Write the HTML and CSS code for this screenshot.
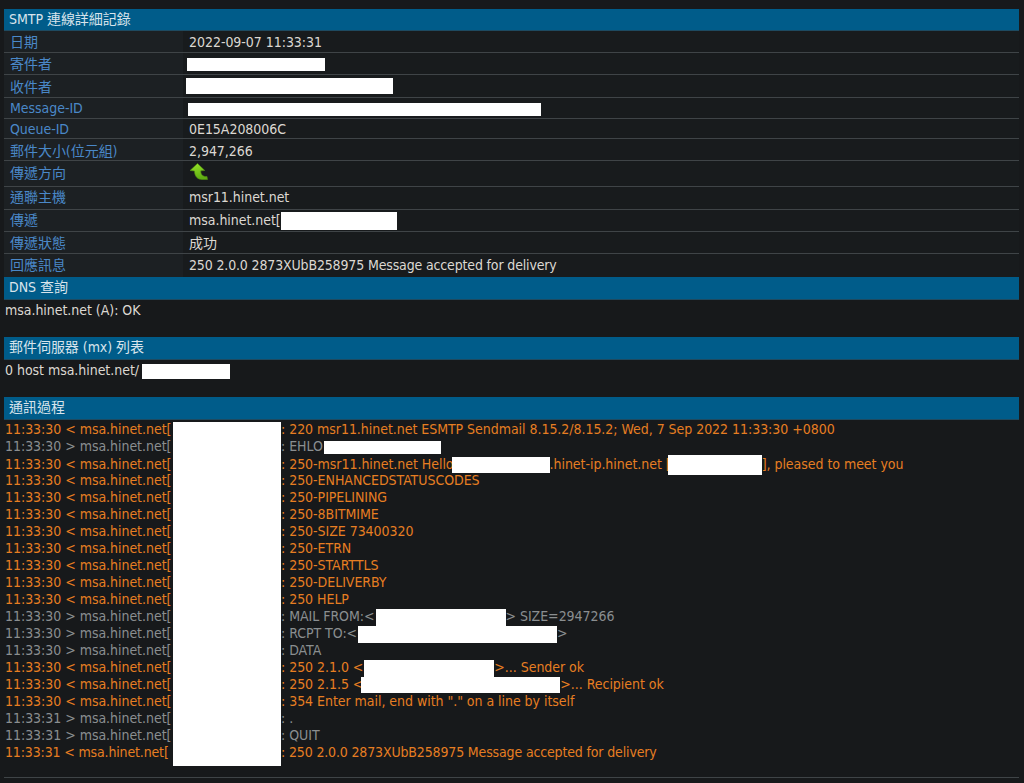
FILE: index.html
```html
<!DOCTYPE html>
<html lang="zh-Hant">
<head>
<meta charset="utf-8">
<title>SMTP 連線詳細記錄</title>
<link rel="stylesheet" href="styles.css">
</head>
<body>
<section class="card">
  <h2 class="bar bar-first">SMTP 連線詳細記錄</h2>
  <div class="info">
    <div class="row h22 s1"><div class="key">日期</div><div class="val">2022-09-07 11:33:31</div></div>
    <div class="row h22 ks1"><div class="key">寄件者</div><div class="val"><span class="mask m-sender"></span></div></div>
    <div class="row h23 ks2"><div class="key">收件者</div><div class="val"><span class="mask m-rcpt"></span></div></div>
    <div class="row h21"><div class="key">Message-ID</div><div class="val"><span class="mask m-msg"></span></div></div>
    <div class="row h20"><div class="key">Queue-ID</div><div class="val">0E15A208006C</div></div>
    <div class="row h22 s2"><div class="key">郵件大小(位元組)</div><div class="val">2,947,266</div></div>
    <div class="row h26 ks2"><div class="key">傳遞方向</div><div class="val">
      <svg class="arrow" width="20" height="18" viewBox="0 0 20 18"><defs><linearGradient id="g" x1="0" y1="0" x2="0.3" y2="1"><stop offset="0" stop-color="#9be52a"/><stop offset="1" stop-color="#5fae12"/></linearGradient></defs><path d="M8.5 0.5 L1 7.5 L5.5 8 C5.5 13 8.5 16.5 13 16.5 L18.5 16.5 L18 13.5 C14 14 11.5 11.5 11.8 7.8 L15.8 7.5 Z" fill="url(#g)" stroke="#4f8f10" stroke-width=".6"/></svg>
    </div></div>
    <div class="row h23"><div class="key">通聯主機</div><div class="val">msr11.hinet.net</div></div>
    <div class="row h22"><div class="key">傳遞</div><div class="val">msa.hinet.net[<span class="mask m-ip"></span></div></div>
    <div class="row h22 s1"><div class="key">傳遞狀態</div><div class="val">成功</div></div>
    <div class="row h23 last s1"><div class="key">回應訊息</div><div class="val tight">250 2.0.0 2873XUbB258975 Message accepted for delivery</div></div>
  </div>
  <h2 class="bar">DNS 查詢</h2>
  <p class="plain">msa.hinet.net (A): OK</p>
  <h2 class="bar">郵件伺服器 (mx) 列表</h2>
  <p class="plain">0 host msa.hinet.net/<span class="mask m-mx"></span></p>
  <h2 class="bar">通訊過程</h2>
  <div class="log">
    <div class="line in"><span class="peer">11:33:30 &lt; msa.hinet.net[</span>: 220 msr11.hinet.net ESMTP Sendmail 8.15.2/8.15.2; Wed, 7 Sep 2022 11:33:30 +0800</div>
    <div class="line out"><span class="peer">11:33:30 &gt; msa.hinet.net[</span>: EHLO<span class="mask m-ehlo"></span></div>
    <div class="line in"><span class="peer">11:33:30 &lt; msa.hinet.net[</span>: 250-msr11.hinet.net Hello<span class="mask m-hello"></span>.hinet-ip.hinet.net [<span class="mask m-hello2"></span>], pleased to meet you</div>
    <div class="line in"><span class="peer">11:33:30 &lt; msa.hinet.net[</span>: 250-ENHANCEDSTATUSCODES</div>
    <div class="line in"><span class="peer">11:33:30 &lt; msa.hinet.net[</span>: 250-PIPELINING</div>
    <div class="line in"><span class="peer">11:33:30 &lt; msa.hinet.net[</span>: 250-8BITMIME</div>
    <div class="line in"><span class="peer">11:33:30 &lt; msa.hinet.net[</span>: 250-SIZE 73400320</div>
    <div class="line in"><span class="peer">11:33:30 &lt; msa.hinet.net[</span>: 250-ETRN</div>
    <div class="line in"><span class="peer">11:33:30 &lt; msa.hinet.net[</span>: 250-STARTTLS</div>
    <div class="line in"><span class="peer">11:33:30 &lt; msa.hinet.net[</span>: 250-DELIVERBY</div>
    <div class="line in"><span class="peer">11:33:30 &lt; msa.hinet.net[</span>: 250 HELP</div>
    <div class="line out"><span class="peer">11:33:30 &gt; msa.hinet.net[</span>: MAIL FROM:&lt;<span class="mask m-from"></span>&gt; SIZE=2947266</div>
    <div class="line out"><span class="peer">11:33:30 &gt; msa.hinet.net[</span>: RCPT TO:&lt;<span class="mask m-to"></span>&gt;</div>
    <div class="line out"><span class="peer">11:33:30 &gt; msa.hinet.net[</span>: DATA</div>
    <div class="line in"><span class="peer">11:33:30 &lt; msa.hinet.net[</span>: 250 2.1.0 &lt;<span class="mask m-from2"></span>&gt;... Sender ok</div>
    <div class="line in"><span class="peer">11:33:30 &lt; msa.hinet.net[</span>: 250 2.1.5 &lt;<span class="mask m-to2"></span>&gt;... Recipient ok</div>
    <div class="line in"><span class="peer">11:33:30 &lt; msa.hinet.net[</span>: 354 Enter mail, end with "." on a line by itself</div>
    <div class="line out"><span class="peer">11:33:31 &gt; msa.hinet.net[</span>: .</div>
    <div class="line out"><span class="peer">11:33:31 &gt; msa.hinet.net[</span>: QUIT</div>
    <div class="line in tight"><span class="peer">11:33:31 &lt; msa.hinet.net[</span>: 250 2.0.0 2873XUbB258975 Message accepted for delivery</div>
    <div class="mask-column"></div>
  </div>
  <hr class="rule">
</section>
</body>
</html>
```
FILE: styles.css
```css
html, body { margin: 0; background: #17191b; }
body {
  height: 783px;
  overflow: hidden;
  padding: 9px 5px 0 4px;
  box-sizing: border-box;
  font-family: "DejaVu Sans Condensed", "Noto Sans CJK TC", sans-serif;
  font-size: 14px;
  letter-spacing: -0.04px;
  color: #dcd8d2;
}
.bar {
  margin: 0;
  height: 23px;
  line-height: 21px;
  padding-left: 5px;
  background: #005c8a;
  color: #d8e4ec;
  font-size: 14px;
  font-weight: 400;
  border-bottom: 1px solid #1e4a60;
  box-sizing: border-box;
}
.bar-first { height: 22px; }
.row {
  display: grid;
  grid-template-columns: 179px 1fr;
  grid-template-rows: minmax(0, 1fr);
  border-bottom: 1px solid #3f4447;
  box-sizing: border-box;
}
.row.last { border-bottom: 0; }
.h20 { height: 20px; } .h21 { height: 21px; } .h22 { height: 22px; } .h23 { height: 23px; } .h26 { height: 26px; }
.key {
  background: #1c2023;
  color: #4a88c8;
  padding-left: 6px;
  line-height: 21px;
  box-sizing: border-box;
  overflow: hidden;
}
.val {
  background: #181b1d;
  padding-left: 6px;
  line-height: 21px;
  white-space: nowrap;
  box-sizing: border-box;
  overflow: hidden;
}
.s1 .key, .s1 .val, .ks1 .key { padding-top: 1px; }
.s2 .key, .s2 .val, .ks2 .key { padding-top: 2px; }
.tight { letter-spacing: -0.15px; }
.mask {
  display: inline-block;
  background: #fff;
  vertical-align: middle;
}
.m-sender { width: 138px; height: 13px; margin-left: -2px; }
.m-rcpt { width: 207px; height: 16px; margin-left: -3px; }
.m-msg { width: 353px; height: 13px; margin-left: -1px; }
.m-ip { width: 116px; height: 18px; }
.m-mx { width: 88px; height: 15px; margin-left: 3px; }
.m-ehlo { width: 117px; height: 13px; margin-left: 1px; }
.m-hello { width: 98px; height: 16px; margin-left: -2px; }
.m-hello2 { width: 94px; height: 20px; margin-left: -3px; }
.m-from { width: 130px; height: 17px; margin-left: 1px; }
.m-to { width: 199px; height: 17px; margin-left: 1px; }
.m-from2 { width: 130px; height: 17px; margin-left: 1px; }
.m-to2 { width: 199px; height: 16px; margin-left: -2px; }
.plain {
  margin: 0;
  height: 37px;
  padding-left: 1px;
  line-height: 21px;
  color: #dcd8d2;
}
.log { position: relative; padding-left: 1px; padding-top: 1px; }
.line { height: 17px; line-height: 17px; white-space: nowrap; }
.in { color: #e67e22; }
.out { color: #8a8e90; }
.peer { display: inline-block; width: 276px; }
.mask-column {
  position: absolute;
  left: 169px;
  top: 2px;
  width: 108px;
  height: 344px;
  background: #fff;
}
.arrow { display: block; margin-top: 2px; }
.rule {
  margin: 16px 0 0;
  border: 0;
  border-top: 1px solid #3f4447;
}
```
